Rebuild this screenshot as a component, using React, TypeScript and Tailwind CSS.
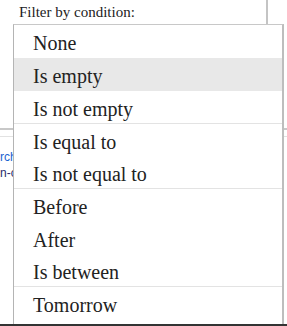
const groups: string[][] = [
  ['None', 'Is empty', 'Is not empty'],
  ['Is equal to', 'Is not equal to'],
  ['Before', 'After', 'Is between'],
  ['Tomorrow'],
];

const heights: Record<string, string> = {
  None: 'h-[33px]',
  'Is empty': 'h-[33px]',
  Before: 'h-[33px]',
  Tomorrow: 'h-[33px]',
};

export default function App() {
  const selected = 'Is empty';

  return (
    <div className="relative flex h-[326px] w-[287px] flex-col overflow-hidden bg-white font-['Liberation_Serif',serif] text-[#222]">
      {/* page behind the menu */}
      <div className="flex h-[24px] w-[268px] items-center border-r-2 border-[#c4c4c4] pl-[19px] text-[15px] leading-none text-[#222]">
        Filter by condition:
      </div>
      <div className="flex flex-1 flex-col">
        <div className="h-[104px]" />
        <div className="h-[2px] bg-[#c8c8c8]" />
        <div className="h-[6px]" />
        <div className="h-[1px] bg-[#e2e2e2]" />
        <div className="flex w-[13px] flex-col overflow-hidden whitespace-nowrap pt-[12px] font-['Liberation_Sans',sans-serif] text-[12px] leading-[16px]">
          <span className="text-[#1a5fd0]">rch</span>
          <span className="text-[#2b2b6b]">n-c</span>
        </div>
      </div>
      <div className="h-[2px] bg-[#333]" />

      {/* dropdown menu */}
      <div className="absolute left-[13px] top-[24px] bottom-[2px] w-[271px] border-l border-t border-r-2 border-l-[#b4b4b4] border-t-[#c8c8c8] border-r-[#bdbdbd] bg-white">
        {groups.map((group, gi) => (
          <div key={gi} className={gi > 0 ? 'border-t border-[#e3e3e3]' : ''}>
            {group.map((item) => (
              <div
                key={item}
                className={`flex items-center pl-[19px] pt-[3px] text-[20px] leading-[22px] ${heights[item] ?? 'h-[32px]'} ${
                  item === selected ? 'bg-[#e8e8e8]' : ''
                }`}
              >
                {item}
              </div>
            ))}
          </div>
        ))}
      </div>
    </div>
  );
}
